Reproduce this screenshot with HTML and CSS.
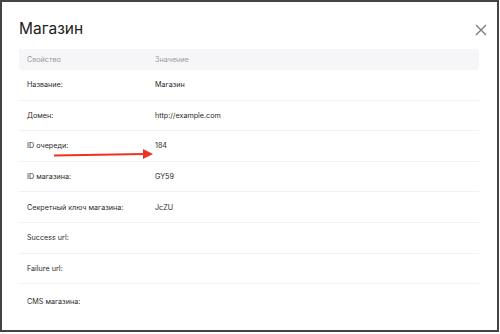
FILE: index.html
```html
<!DOCTYPE html>
<html>
<head>
<meta charset="utf-8">
<title>Магазин</title>
<link rel="stylesheet" href="styles.css">
</head>
<body>
<div class="modal">
    <div class="modal-head">
        <h2 class="modal-title">Магазин</h2>
        <span class="close" title="Закрыть">
            <svg width="12" height="12" viewBox="0 0 12 12"><path d="M1 1L11 11M11 1L1 11" stroke="#7a7a7a" stroke-width="1.3" fill="none"/></svg>
        </span>
    </div>

    <div class="props">
        <div class="row row-head">
            <div class="cell key">Свойство</div>
            <div class="cell">Значение</div>
        </div>
        <div class="row">
            <div class="cell key">Название:</div>
            <div class="cell">Магазин</div>
        </div>
        <div class="row">
            <div class="cell key">Домен:</div>
            <div class="cell">http://example.com</div>
        </div>
        <div class="row">
            <div class="cell key">ID очереди:</div>
            <div class="cell">184</div>
        </div>
        <div class="row">
            <div class="cell key">ID магазина:</div>
            <div class="cell">GY59</div>
        </div>
        <div class="row">
            <div class="cell key">Секретный ключ магазина:</div>
            <div class="cell">JcZU</div>
        </div>
        <div class="row">
            <div class="cell key">Success url:</div>
            <div class="cell"></div>
        </div>
        <div class="row">
            <div class="cell key">Failure url:</div>
            <div class="cell"></div>
        </div>
        <div class="row row-last">
            <div class="cell key">CMS магазина:</div>
            <div class="cell"></div>
        </div>
    </div>

    <svg class="arrow" width="110" height="16" viewBox="0 0 110 16">
        <path d="M1 9.5L92 8" stroke="#ee3322" stroke-width="2" fill="none"/>
        <path d="M90 3L100 8L90 13Z" fill="#ee3322"/>
    </svg>
</div>
</body>
</html>
```

FILE: styles.css
```css
body {
    margin: 0;
    background: #fff;
    font-family: Inter, "Noto Sans", sans-serif;
}

.modal {
    position: relative;
    width: 499px;
    height: 332px;
    box-sizing: border-box;
    border: 2px solid #444;
    background: #fff;
    padding: 0 18px 0 17px;
}

.modal-head {
    display: flex;
    justify-content: space-between;
    align-items: flex-start;
    height: 47px;
}

.modal-title {
    margin: 17px 0 0 0;
    font-size: 15.5px;
    font-weight: 400;
    color: #222;
    line-height: 20px;
}

.close {
    display: block;
    margin: 18px -8px 0 0;
    width: 12px;
    height: 12px;
}

.props {
    font-size: 7.2px;
    color: #2a2a2a;
}

.row {
    display: flex;
    align-items: center;
    height: 30.6px;
    border-bottom: 1px solid #f1f1f3;
    box-sizing: border-box;
}

.row-head {
    height: 21px;
    background: #f6f6f9;
    border-bottom: none;
    border-radius: 2px;
    color: #999;
}

.row-last {
    border-bottom: none;
    height: 34px;
}

.cell {
    padding-left: 8px;
}

.key {
    width: 120px;
}

.arrow {
    position: absolute;
    left: 51px;
    top: 144px;
}
```
